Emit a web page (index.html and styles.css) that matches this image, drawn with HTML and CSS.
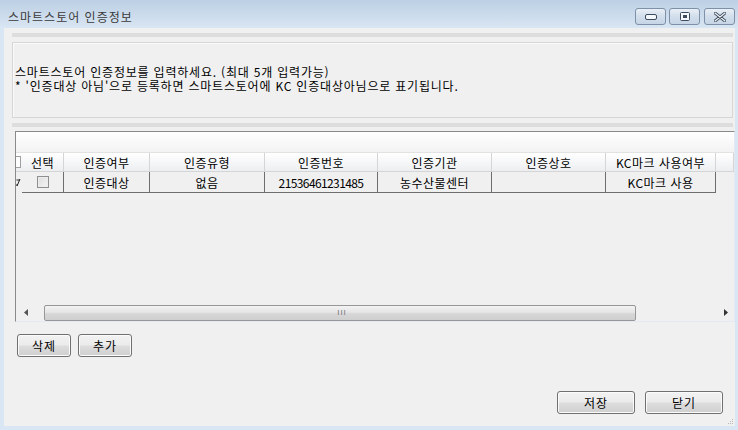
FILE: index.html
```html
<!DOCTYPE html>
<html lang="ko">
<head>
    <meta charset="UTF-8">
    <title>스마트스토어 인증정보</title>
    <link rel="stylesheet" href="styles.css">
</head>
<body>

    <div class="window">
        <div class="titlebar">
            <span class="title">스마트스토어 인증정보</span>
            <div class="controls">
                <span class="ctl">
                    <svg width="12" height="6" viewBox="0 0 12 6"><rect x="0.5" y="0.5" width="11" height="5" rx="1.5" fill="#f4f7fb" stroke="#3d4b5c"/></svg>
                </span>
                <span class="ctl">
                    <svg width="10" height="9" viewBox="0 0 10 9"><rect x="0.5" y="0.5" width="9" height="8" rx="1" fill="#f4f7fb" stroke="#3d4b5c"/><rect x="3" y="3" width="4" height="3" fill="#3d4b5c"/></svg>
                </span>
                <span class="ctl">
                    <svg width="12" height="10" viewBox="0 0 12 10"><path d="M1 1 L11 9 M11 1 L1 9" stroke="#3d4b5c" stroke-width="3" stroke-linecap="round"/><path d="M1 1 L11 9 M11 1 L1 9" stroke="#f4f7fb" stroke-width="1.2" stroke-linecap="round"/></svg>
                </span>
            </div>
        </div>

        <div class="client">
            <div class="info-wrap">
                <div class="info">
                    <p>스마트스토어 인증정보를 입력하세요. (최대 5개 입력가능)</p>
                    <p>* '인증대상 아님'으로 등록하면 스마트스토어에 KC 인증대상아님으로 표기됩니다.</p>
                </div>
            </div>

            <div class="grid">
                <div class="group-strip"></div>
                <div class="row head">
                    <div class="cell rowhead"><span class="mini-check"></span></div>
                    <div class="cell">선택</div>
                    <div class="cell">인증여부</div>
                    <div class="cell">인증유형</div>
                    <div class="cell">인증번호</div>
                    <div class="cell">인증기관</div>
                    <div class="cell">인증상호</div>
                    <div class="cell">KC마크 사용여부</div>
                    <div class="cell filler"></div>
                </div>
                <div class="row data">
                    <div class="cell rowhead">
                        <svg width="5" height="10" viewBox="0 0 5 10"><path d="M4 1 L1 8 M1 8 L1 6 M0.5 2 L3.5 2" stroke="#222" stroke-width="1"/></svg>
                    </div>
                    <div class="cell"><span class="check"></span></div>
                    <div class="cell">인증대상</div>
                    <div class="cell">없음</div>
                    <div class="cell num">21536461231485</div>
                    <div class="cell">농수산물센터</div>
                    <div class="cell"></div>
                    <div class="cell">KC마크 사용</div>
                    <div class="cell filler"></div>
                </div>
                <div class="grid-empty"></div>
                <div class="hscroll">
                    <span class="arrow">
                        <svg width="4" height="7" viewBox="0 0 4 7"><path d="M4 0 L0 3.5 L4 7 Z" fill="#555"/></svg>
                    </span>
                    <div class="track">
                        <div class="thumb"><span class="grip">III</span></div>
                    </div>
                    <span class="arrow">
                        <svg width="4" height="7" viewBox="0 0 4 7"><path d="M0 0 L4 3.5 L0 7 Z" fill="#333"/></svg>
                    </span>
                </div>
            </div>

            <div class="btn-row">
                <button class="btn small">삭제</button>
                <button class="btn small">추가</button>
            </div>

            <div class="btn-row bottom">
                <button class="btn wide">저장</button>
                <button class="btn wide">닫기</button>
            </div>

            <!-- size grip -->
            <svg class="sizegrip" width="7" height="7" viewBox="0 0 7 7">
                <rect x="5" y="1" width="1" height="1" fill="#b8b8b8"/>
                <rect x="3" y="3" width="1" height="1" fill="#b8b8b8"/>
                <rect x="5" y="3" width="1" height="1" fill="#b8b8b8"/>
                <rect x="1" y="5" width="1" height="1" fill="#b8b8b8"/>
                <rect x="3" y="5" width="1" height="1" fill="#b8b8b8"/>
                <rect x="5" y="5" width="1" height="1" fill="#b8b8b8"/>
            </svg>
        </div>
    </div>

</body>
</html>
```

FILE: styles.css
```css
body {
    margin: 0;
    font-family: "Noto Sans CJK KR", "Liberation Sans", sans-serif;
    font-size: 12px;
    color: #000;
    background: #d7e4f2;
}

.window {
    width: 738px;
    height: 430px;
    display: flex;
    flex-direction: column;
    background: linear-gradient(to bottom, #bccfe4, #d9e6f3 28px, #d9e6f3);
}

.titlebar {
    height: 28px;
    display: flex;
    justify-content: space-between;
    align-items: flex-start;
    padding: 0 3px 0 8px;
}

.title {
    margin-top: 10px;
    line-height: 14px;
    font-size: 12px;
    letter-spacing: 1px;
    color: #3a3a3a;
}

.controls {
    display: flex;
    gap: 3px;
    margin-top: 8px;
}

.ctl {
    width: 29px;
    height: 15px;
    border: 1px solid #7e91a8;
    border-radius: 3px;
    background: linear-gradient(to bottom, #e9eff6, #d2deeb 50%, #c6d5e6);
    display: flex;
    align-items: center;
    justify-content: center;
}

.ctl:last-child {
    margin-left: 1px;
}

.client {
    flex: 1;
    margin: 0 3px 4px 4px;
    background: #f0f0f0;
    display: flex;
    flex-direction: column;
    position: relative;
}

/* top info panel */
.info-wrap {
    margin: 5px 2px 0 8px;
    border-top: 4px solid #dddddd;
    border-bottom: 4px solid #dddddd;
    padding: 5px 0;
}

.info {
    box-sizing: border-box;
    height: 76px;
    border: 1px solid #d6d6d6;
    box-shadow: inset 1px 1px 0 #fafafa;
    padding: 22px 2px 0;
}

.info p {
    margin: 0;
    line-height: 14px;
    letter-spacing: 0.8px;
    white-space: nowrap;
}

/* data grid */
.grid {
    margin: 4px 0 0 11px;
    height: 189px;
    border: 1px solid;
    border-color: #8a8a8a #e3eaf3 #e3eaf3 #8a8a8a;
    display: flex;
    flex-direction: column;
    overflow: hidden;
}

.group-strip {
    height: 20px;
    background: linear-gradient(to bottom, #ffffff, #f3f3f3);
}

.row {
    display: grid;
    grid-template-columns: 6px 42px 86px 115px 113px 114px 114px 110px 1fr;
}

.cell {
    display: flex;
    align-items: center;
    justify-content: center;
    white-space: nowrap;
    overflow: hidden;
    letter-spacing: 0.5px;
}

.head {
    height: 19px;
    border-top: 1px solid #e2e2e2;
}

.head .cell {
    background: linear-gradient(to bottom, #ffffff, #f4f5f7 60%, #eceef1);
    border-right: 1px solid #d5d5d5;
    border-bottom: 1px solid #d5d5d5;
}

.head .rowhead {
    justify-content: flex-start;
    border-right: none;
}

.mini-check {
    width: 4px;
    height: 10px;
    border: 1px solid #a0a0a0;
    border-left: none;
    background: #fff;
}

.data {
    height: 21px;
}

.data .cell {
    background: #f0f0f0;
    border-right: 1px solid #6e6e6e;
    border-bottom: 1px solid #6e6e6e;
}

.data .rowhead {
    border-right: none;
    border-bottom: none;
    justify-content: flex-start;
}

.data .filler {
    border-right: none;
    border-bottom: none;
}

.num {
    letter-spacing: -0.6px;
}

.check {
    width: 10px;
    height: 10px;
    border: 1px solid #8f8f8f;
    background: linear-gradient(135deg, #dcdcdc, #f6f6f6);
    box-shadow: inset 0 0 0 1px #ececec;
}

.grid-empty {
    flex: 1;
}

.hscroll {
    height: 17px;
    display: flex;
    align-items: center;
}

.arrow {
    width: 17px;
    height: 17px;
    display: flex;
    align-items: center;
    justify-content: center;
}

.arrow:first-child {
    width: 20px;
}

.track {
    flex: 1;
    height: 17px;
    background: #f0f0f0;
    display: flex;
    align-items: center;
    padding-left: 8px;
}

.thumb {
    width: 590px;
    height: 14px;
    border: 1px solid #979797;
    border-radius: 2px;
    background: linear-gradient(to bottom, #f3f3f3, #e5e5e5 45%, #d7d7d7 55%, #cfcfcf);
    display: flex;
    align-items: center;
    justify-content: center;
}

.grip {
    font-family: "Liberation Sans", sans-serif;
    font-size: 8px;
    color: #777;
    letter-spacing: 1px;
    margin-left: 4px;
}

/* buttons */
.btn-row {
    display: flex;
    gap: 7px;
    margin: 12px 0 0 13px;
}

.btn-row.bottom {
    margin: auto 12px 12px 0;
    justify-content: flex-end;
    gap: 10px;
}

.btn {
    font-family: "Noto Sans CJK KR", "Liberation Sans", sans-serif;
    font-size: 12px;
    letter-spacing: 1px;
    color: #000;
    height: 23px;
    padding: 0;
    border: 1px solid #707070;
    border-radius: 3px;
    background: linear-gradient(to bottom, #f2f2f2, #ebebeb 48%, #dddddd 52%, #cfcfcf);
    box-shadow: inset 0 0 0 1px #fbfbfb;
}

.btn.small {
    width: 54px;
}

.btn.wide {
    width: 78px;
}

.sizegrip {
    position: absolute;
    right: 1px;
    bottom: 1px;
}
```
